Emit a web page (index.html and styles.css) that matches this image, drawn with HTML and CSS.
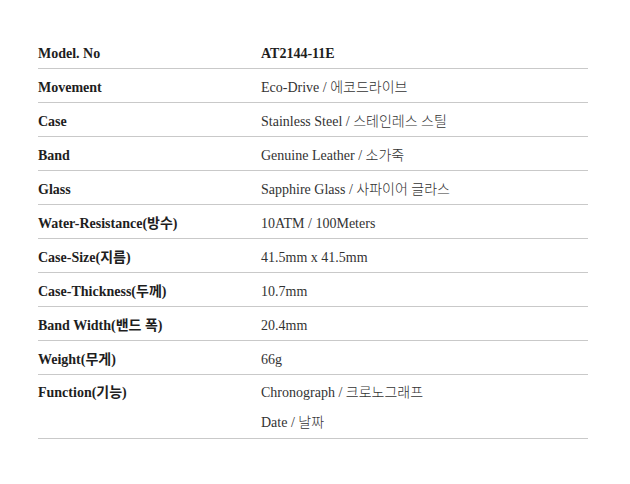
FILE: index.html
```html
<!DOCTYPE html>
<html lang="ko">
<head>
<meta charset="utf-8">
<title>Spec</title>
<link rel="stylesheet" href="styles.css">
</head>
<body>
<div class="spec">
  <div class="row"><div class="label">Model. No</div><div class="value strong">AT2144-11E</div></div>
  <div class="row"><div class="label">Movement</div><div class="value">Eco-Drive / 에코드라이브</div></div>
  <div class="row"><div class="label">Case</div><div class="value">Stainless Steel / 스테인레스 스틸</div></div>
  <div class="row"><div class="label">Band</div><div class="value">Genuine Leather / 소가죽</div></div>
  <div class="row"><div class="label">Glass</div><div class="value">Sapphire Glass / 사파이어 글라스</div></div>
  <div class="row"><div class="label">Water-Resistance(방수)</div><div class="value">10ATM / 100Meters</div></div>
  <div class="row"><div class="label">Case-Size(지름)</div><div class="value">41.5mm x 41.5mm</div></div>
  <div class="row"><div class="label">Case-Thickness(두께)</div><div class="value">10.7mm</div></div>
  <div class="row"><div class="label">Band Width(밴드 폭)</div><div class="value">20.4mm</div></div>
  <div class="row"><div class="label">Weight(무게)</div><div class="value">66g</div></div>
  <div class="row multi"><div class="label">Function(기능)</div><div class="value">Chronograph / 크로노그래프<br>Date / 날짜</div></div>
</div>
</body>
</html>
```

FILE: styles.css
```css
html, body {
  margin: 0;
  padding: 0;
  background: #fff;
}
body {
  font-family: "Liberation Serif", "Noto Sans CJK KR", serif;
  font-size: 14px;
  color: #333;
}
.spec {
  width: 550px;
  margin: 35px 0 0 38px;
}
.row {
  display: grid;
  grid-template-columns: 223px 1fr;
  box-sizing: border-box;
  height: 34px;
  border-bottom: 1px solid #c9c9c9;
  padding-top: 4px;
  line-height: 30px;
}
.row.multi {
  height: 64px;
  padding-top: 3px;
}
.label {
  font-weight: bold;
  color: #1e1e1e;
}
.value {
  color: #333;
  font-weight: 300;
}
.value.strong {
  font-weight: bold;
  color: #1e1e1e;
}
```
